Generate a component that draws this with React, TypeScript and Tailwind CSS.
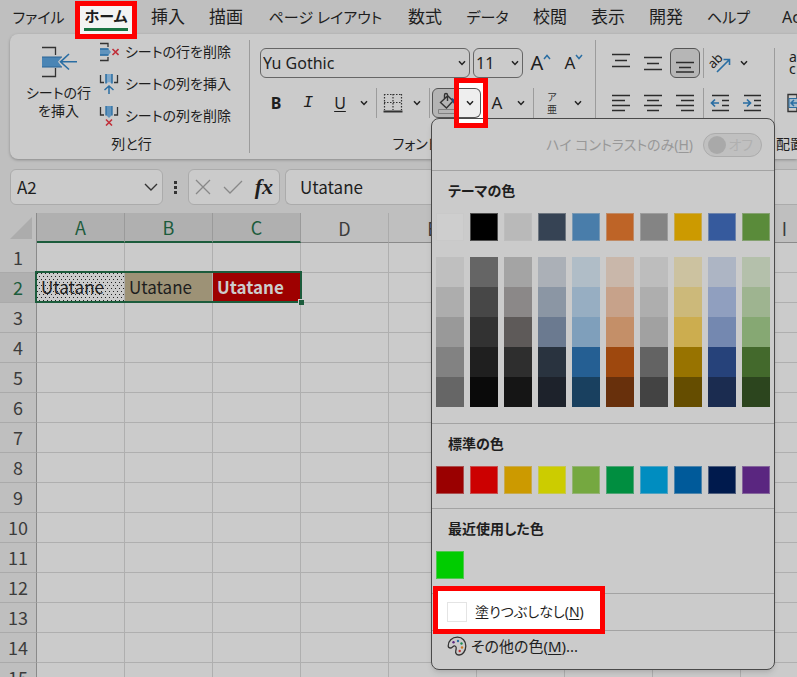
import type { ReactNode } from "react";
import clsx from "clsx";

const TABS = [
  { name: "ファイル", className: "w-[69px] text-[15px]" },
  { name: "ホーム", className: "w-[66px] text-[15px]" },
  { name: "挿入", className: "w-[58px] text-[17px]" },
  { name: "描画", className: "w-[58px] text-[17px]" },
  { name: "ページ レイアウト", className: "w-[141px] text-[15px]" },
  { name: "数式", className: "w-[58px] text-[17px]" },
  { name: "データ", className: "w-[67px] text-[15px]" },
  { name: "校閲", className: "w-[58px] text-[17px]" },
  { name: "表示", className: "w-[58px] text-[17px]" },
  { name: "開発", className: "w-[58px] text-[17px]" },
  { name: "ヘルプ", className: "w-[67px] text-[15px]" },
  { name: "Ac", className: "w-[58px] text-base" },
];

const COLUMNS = ["A", "B", "C", "D", "E", "F", "G", "H", "I"];
const ROWS = Array.from({ length: 15 }, (_, i) => i + 1);

const THEME_COLORS = [
  "#cecece",
  "#000000",
  "#b9b9b9",
  "#364354",
  "#497daa",
  "#be6427",
  "#848484",
  "#cc9a00",
  "#365a9d",
  "#5a8b3a",
];

const THEME_SHADES = [
  ["#bfbfbf", "#adadad", "#999999", "#828282", "#666666"],
  ["#656565", "#474747", "#323232", "#1f1f1f", "#0a0a0a"],
  ["#a4a4a4", "#8b8888", "#5e5a59", "#2e2e2e", "#151515"],
  ["#abb0b7", "#8b96a4", "#6b7a90", "#29333f", "#1d222b"],
  ["#b0bdc7", "#97aec2", "#7f9fbb", "#255f93", "#19405f"],
  ["#c9b7aa", "#c7a28a", "#c48f68", "#9e480e", "#68300c"],
  ["#bdbdbd", "#aeaeae", "#a1a1a1", "#636363", "#434343"],
  ["#ccc2a0", "#ccb97a", "#ccad4f", "#987300", "#654d00"],
  ["#adb5c4", "#909fbf", "#7488b0", "#26427a", "#1b2c50"],
  ["#b4c0ab", "#9eb490", "#86a873", "#43692c", "#2c451e"],
];

const STANDARD_COLORS = [
  "#9a0000",
  "#cc0000",
  "#cc9a00",
  "#cccc00",
  "#75a840",
  "#008e40",
  "#008dc0",
  "#005a9a",
  "#001a4d",
  "#5a2680",
];

const Chevron = ({ className }: { className?: string }) => (
  <svg
    viewBox="0 0 8 6"
    className={clsx("h-[6px] w-2 shrink-0", className)}
    fill="none"
    stroke="#222"
    strokeWidth="1.5"
  >
    <path d="M1 1.2 4 4.4 7 1.2" />
  </svg>
);

const Divider = () => <div className="w-px self-stretch bg-[#9c9c9c]" />;

const IconButton: React.FC<{
  label: string;
  className?: string;
  children: ReactNode;
}> = ({ label, className, children }) => (
  <button
    type="button"
    aria-label={label}
    className={clsx(
      "flex h-[30px] shrink-0 items-center justify-center",
      className ?? "w-8",
    )}
  >
    {children}
  </button>
);

const InsertRowIcon = () => (
  <svg viewBox="0 0 38 32" className="h-8 w-[38px] shrink-0" fill="none">
    <path d="M2 1.5h13.5V9M2 30.5h13.500V22" stroke="#333" strokeWidth="1.3" />
    <path d="M2 11h20l-4 4.800 4 5.200H2z" fill="#4a85b5" />
    <path d="M2 11h20M2 21h20" stroke="#2a6496" strokeWidth="1" />
    <path
      d="M37 15.800H21M29 8l-8.500 7.800L29 23.500"
      stroke="#2a6ea3"
      strokeWidth="1.6"
    />
  </svg>
);

const DeleteRowIcon = () => (
  <svg viewBox="0 0 20 20" className="h-5 w-5 shrink-0" fill="none">
    <path d="M1 1.500h8V5M1 18.500h8V15" stroke="#333" strokeWidth="1.3" />
    <path d="M1 6.500h8l3 3.500-3 3.500H1z" fill="#5f93bd" />
    <path d="M1 7h8.500M1 13h8.500" stroke="#2a6ea3" strokeWidth="1.3" />
    <path d="m13.500 7 6 6m0-6-6 6" stroke="#c0303a" strokeWidth="1.6" />
  </svg>
);

const InsertColumnIcon = () => (
  <svg viewBox="0 0 20 20" className="h-5 w-5 shrink-0" fill="none">
    <path d="M1.500 1v7.500H5M18.500 1v7.500H15" stroke="#333" strokeWidth="1.3" />
    <path d="M7 0h6v9.500L10 8l-3 1.500z" fill="#7fa8ca" />
    <path d="M7 0v9.500M13 0v9.500" stroke="#2a6ea3" strokeWidth="1.5" />
    <path d="M10 20v-8M5.500 16 10 12l4.500 4" stroke="#2a6ea3" strokeWidth="1.5" />
  </svg>
);

const DeleteColumnIcon = () => (
  <svg viewBox="0 0 20 20" className="h-5 w-5 shrink-0" fill="none">
    <path d="M1.500 1v8H5M18.500 1v8H15" stroke="#333" strokeWidth="1.3" />
    <path d="M7 0h6v9l-3 3-3-3z" fill="#5f93bd" />
    <path d="M7 0v9.500M13 0v9.500" stroke="#2a6ea3" strokeWidth="1.3" />
    <path d="m7 13.500 6 6m0-6-6 6" stroke="#c0303a" strokeWidth="1.6" />
  </svg>
);

const BordersIcon = () => (
  <svg viewBox="0 0 20 20" className="h-5 w-5" fill="none" stroke="#333">
    <path
      d="M1 1.500h18M1 9.500h18M1.500 1v16M10 1v16M18.500 1v16"
      strokeDasharray="1.5 1.5"
      strokeWidth="1.2"
    />
    <path d="M0.500 18.500h19" strokeWidth="2" />
  </svg>
);

const FillIcon = () => (
  <svg viewBox="0 0 22 24" className="h-6 w-[22px] shrink-0" fill="none">
    <path
      d="M10.500 5 3.500 11.500l6 5.500 6.500-7-5.500-5.500M10.500 10V4c0-2-3-2-3 0v3.500"
      stroke="#333"
      strokeWidth="1.4"
    />
    <path d="M14.500 7c3 .5 4 3.500 3.500 7.500L15 10z" fill="#1d4f80" />
    <path d="M1.500 18.500h20v4h-20z" stroke="#808080" />
  </svg>
);

const LineIcon = ({ d }: { d: string }) => (
  <svg
    viewBox="0 0 20 20"
    className="h-5 w-5"
    fill="none"
    stroke="#2c2c2c"
    strokeWidth="1.4"
  >
    <path d={d} />
  </svg>
);

const OrientationIcon = () => (
  <svg viewBox="0 0 22 22" className="h-[22px] w-[22px]" fill="none">
    <text
      x="0"
      y="14"
      fontSize="13"
      fill="#222"
      transform="rotate(-45 6 11)"
      fontFamily="Noto Sans"
    >
      ab
    </text>
    <path
      d="M8 20 20.500 7.500M14.500 7.500H20.500V13"
      stroke="#2a6ea3"
      strokeWidth="1.6"
    />
  </svg>
);

const IndentIcon = ({ flip }: { flip?: boolean }) => (
  <svg viewBox="0 0 20 20" className="h-5 w-5" fill="none">
    <path
      d="M2 2.500h17M12 7.500h7M12 12.500h7M2 17.500h17"
      stroke="#2c2c2c"
      strokeWidth="1.4"
    />
    <path
      d={
        flip
          ? "M1 10h7M5 6.500 8.500 10 5 13.500"
          : "M9 10H2M5 6.500 1.500 10 5 13.500"
      }
      stroke="#2a6ea3"
      strokeWidth="1.7"
    />
  </svg>
);

const MergeIcon = () => (
  <svg viewBox="0 0 20 20" className="h-5 w-5 shrink-0" fill="none">
    <path d="M1 1.500h18v17H1zM10 1v4M10 15v4" stroke="#333" strokeWidth="1.4" />
    <path d="M2 5.500h16v9H2z" fill="#a6bccd" stroke="#2a6ea3" />
    <path
      d="M4 10h12M7 7l-3 3 3 3M13 7l3 3-3 3"
      stroke="#2a6ea3"
      strokeWidth="1.5"
    />
  </svg>
);

const PaletteIcon = () => (
  <svg viewBox="0 0 20 20" className="h-5 w-5 shrink-0" fill="none">
    <path
      d="M1.200 10C1 5 5 1.200 10.500 1.200c5 0 8.300 3.800 8.300 8.800 0 5-3.300 9.300-7 9-2.600-.3-3.600-2-3-4.300.6-2.200.7-4.200-.8-4.700-1.800-.6-2.800 2-4.500 2-1.300 0-2.200-.7-2.300-2Z"
      stroke="#333"
      strokeWidth="1.3"
    />
    <circle cx="6.500" cy="6.200" r="1.200" fill="#5a2680" />
    <circle cx="11" cy="5" r="1.200" fill="#2a6ea3" />
    <circle cx="14.500" cy="7.500" r="1.200" fill="#1a8a50" />
    <circle cx="15" cy="11.500" r="1.200" fill="#cc7a20" />
    <circle cx="12.700" cy="15" r="1.200" fill="#c03030" />
  </svg>
);

const Swatch = ({ color }: { color: string }) => (
  <button
    type="button"
    aria-label={color}
    className="block h-7 w-7 border border-[#c4c4c4]/40"
    style={{ backgroundColor: color }}
  />
);

const SectionTitle = ({ children }: { children: ReactNode }) => (
  <h2 className="flex h-[42px] items-center pb-0.5 pl-3 text-sm font-bold">
    {children}
  </h2>
);

const FillColorMenu = () => (
  <div className="absolute top-[29px] -left-0.5 z-10 w-[344px] rounded-lg border border-[#4a4a4a] bg-[#cbcbcb] whitespace-nowrap shadow-md">
    <div className="flex h-[52px] items-center justify-end gap-2.5 border-b border-[#a3a3a3] pr-3 text-sm text-[#989898]">
      <label htmlFor="contrast">
        ハイ コントラストのみ(<u className="underline-offset-2">H</u>)
      </label>
      <button
        id="contrast"
        type="button"
        role="switch"
        aria-checked={false}
        className="flex h-6 w-[59px] items-center justify-between rounded-full border border-[#acacac] bg-[#c0c0c0] pr-2 pl-1 text-[#b0b0b0]"
      >
        <span className="h-[18px] w-[18px] rounded-full bg-[#a9a9a9]" />
        オフ
      </button>
    </div>
    <section className="border-b border-[#a3a3a3] px-1 pb-4">
      <SectionTitle>テーマの色</SectionTitle>
      <div className="flex gap-1.5">
        {THEME_COLORS.map((color) => (
          <Swatch key={color} color={color} />
        ))}
      </div>
      <div className="mt-4 flex gap-1.5">
        {THEME_SHADES.map((shades) => (
          <div key={shades[0]} className="flex flex-col">
            {shades.map((color) => (
              <button
                key={color}
                type="button"
                aria-label={color}
                className="h-[30px] w-7"
                style={{ backgroundColor: color }}
              />
            ))}
          </div>
        ))}
      </div>
    </section>
    <section className="border-b border-[#a3a3a3] px-1 pb-3.5">
      <SectionTitle>標準の色</SectionTitle>
      <div className="flex gap-1.5">
        {STANDARD_COLORS.map((color) => (
          <Swatch key={color} color={color} />
        ))}
      </div>
    </section>
    <section className="border-b border-[#a3a3a3] px-1 pb-3.5">
      <SectionTitle>最近使用した色</SectionTitle>
      <Swatch color="#00cc00" />
    </section>
    <div className="relative border-b border-[#a3a3a3]">
      <span className="absolute -top-2 left-px h-12 w-[172px] border-5 border-[#fe0000] bg-white" />
      <button
        type="button"
        className="relative flex h-9 items-center gap-2 pl-[15px] text-sm"
      >
        <span className="h-5 w-5 border border-[#e4e4e4]" />
        <span>
          塗りつぶしなし(<u className="underline-offset-2">N</u>)
        </span>
      </button>
    </div>
    <button
      type="button"
      className="mb-2 flex h-[30px] items-center gap-1 pl-[15px] text-[15px]"
    >
      <PaletteIcon />
      <span>
        その他の色(<u className="underline-offset-2">M</u>)...
      </span>
    </button>
  </div>
);

const TabBar = () => (
  <nav className="flex h-[34px] items-center pl-1 whitespace-nowrap">
    {TABS.map(({ name, className }) => (
      <button
        key={name}
        type="button"
        className={clsx(
          "relative h-[34px] shrink-0",
          name === "ホーム" && "font-bold",
          className,
        )}
      >
        {name === "ホーム" ? (
          <>
            <span className="absolute inset-x-0.5 top-px z-10 h-[38px] border-5 border-[#fe0000] bg-[#f4f4f4]" />
            <span className="relative z-10 mx-auto block w-11 border-b-3 border-[#1a7343] leading-6">
              {name}
            </span>
          </>
        ) : (
          name
        )}
      </button>
    ))}
  </nav>
);

const CellsGroup = () => (
  <section className="flex w-[239px] shrink-0 flex-col text-sm whitespace-nowrap">
    <div className="flex h-[100px] gap-1">
      <button
        type="button"
        className="flex w-[85px] flex-col items-center gap-1.5 pt-3 pl-3 leading-[18px]"
      >
        <InsertRowIcon />
        <span>
          シートの行
          <br />
          を挿入
        </span>
      </button>
      <div className="flex flex-col pt-0.5">
        <button type="button" className="flex h-8 items-center gap-1.5">
          <DeleteRowIcon />
          シートの行を削除
        </button>
        <button type="button" className="flex h-8 items-center gap-1.5">
          <InsertColumnIcon />
          シートの列を挿入
        </button>
        <button type="button" className="flex h-8 items-center gap-1.5">
          <DeleteColumnIcon />
          シートの列を削除
        </button>
      </div>
    </div>
    <h3 className="pl-1 text-center">列と行</h3>
  </section>
);

const FontGroup = () => (
  <section className="flex w-[345px] shrink-0 flex-col pt-3.5 pl-2.5">
    <div className="flex h-[30px] items-center gap-[3px]">
      <div className="relative">
        <select
          aria-label="フォント"
          className="h-[30px] w-[210px] appearance-none rounded-md border border-[#666] pl-0.5 text-base"
        >
          <option>Yu Gothic</option>
        </select>
        <Chevron className="pointer-events-none absolute top-3 right-1" />
      </div>
      <div className="relative">
        <select
          aria-label="フォント サイズ"
          className="h-[30px] w-[50px] appearance-none rounded-md border border-[#666] pl-0.5 text-base"
        >
          <option>11</option>
        </select>
        <Chevron className="pointer-events-none absolute top-3 right-1" />
      </div>
      <IconButton label="フォント サイズの拡大" className="w-[30px]">
        <span className="text-xl">A</span>
        <svg viewBox="0 0 8 6" className="mb-3 h-[6px] w-2" fill="none">
          <path d="M1 5 4 1.500 7 5" stroke="#2a6ea3" strokeWidth="1.5" />
        </svg>
      </IconButton>
      <IconButton label="フォント サイズの縮小" className="w-[30px]">
        <span className="text-[17px]">A</span>
        <svg viewBox="0 0 8 6" className="mb-3 h-[6px] w-2" fill="none">
          <path d="M1 1 4 4.500 7 1" stroke="#2a6ea3" strokeWidth="1.5" />
        </svg>
      </IconButton>
    </div>
    <div className="mt-2.5 flex h-[30px] items-center">
      <IconButton label="太字">
        <b className="text-base">B</b>
      </IconButton>
      <IconButton label="斜体">
        <i className="font-['Liberation_Mono',monospace] text-[17px]">I</i>
      </IconButton>
      <IconButton label="下線">
        <u className="text-base underline-offset-2">U</u>
      </IconButton>
      <IconButton label="下線の種類" className="w-4">
        <Chevron />
      </IconButton>
      <span className="w-1" />
      <Divider />
      <IconButton label="罫線">
        <BordersIcon />
      </IconButton>
      <IconButton label="罫線の種類" className="w-4">
        <Chevron />
      </IconButton>
      <span className="w-1" />
      <Divider />
      <div className="relative ml-0.5 flex h-[30px] w-[49px] rounded-md border border-[#555] bg-[#b4b4b4]">
        <IconButton label="塗りつぶしの色" className="-mt-px w-[22px] pl-2">
          <FillIcon />
        </IconButton>
        <FillColorMenu />
        <span className="absolute -top-[11px] left-[21px] z-20 h-[50px] w-[34px] border-5 border-[#fe0000] bg-white">
          <span className="block h-9 border-b border-[#4a4a4a]" />
        </span>
        <IconButton
          label="塗りつぶしの色の選択"
          className="absolute -top-px left-[26px] z-20 w-[22px] rounded-r-md border border-l-0 border-[#555] bg-[#eeeeee]"
        >
          <Chevron />
        </IconButton>
      </div>
      <IconButton label="フォントの色">
        <span className="text-[17px]">A</span>
      </IconButton>
      <IconButton label="フォントの色の選択" className="w-4">
        <Chevron />
      </IconButton>
      <span className="w-1" />
      <Divider />
      <IconButton label="ふりがなの表示" className="w-9">
        <span className="flex flex-col text-[10px] leading-3 text-[#333]">
          <span>ア</span>
          <span>亜</span>
        </span>
      </IconButton>
      <IconButton label="ふりがなの設定" className="w-4">
        <Chevron />
      </IconButton>
    </div>
    <h3 className="pt-4 pr-6 text-center text-sm">フォント</h3>
  </section>
);

const AlignmentGroup = () => (
  <section className="flex w-[178px] shrink-0 flex-col pt-3.5 pl-[9px]">
    <div className="flex h-[30px] items-center">
      <IconButton label="上揃え">
        <LineIcon d="M1 1.500h18M4 7.500h12M1 13.500h18" />
      </IconButton>
      <IconButton label="上下中央揃え">
        <LineIcon d="M1 4.500h18M4 10.500h12M1 16.500h18" />
      </IconButton>
      <IconButton
        label="下揃え"
        className="mx-px w-[30px] rounded-md border border-[#555] bg-[#b6b6b6]"
      >
        <LineIcon d="M1 9.500h18M4 14.500h12M1 19h18" />
      </IconButton>
      <span className="w-0.5" />
      <Divider />
      <IconButton label="方向">
        <OrientationIcon />
      </IconButton>
      <IconButton label="方向の選択" className="w-4">
        <Chevron />
      </IconButton>
    </div>
    <div className="mt-2.5 flex h-[30px] items-center">
      <IconButton label="左揃え">
        <LineIcon d="M1 2.500h18M1 7.500h13M1 12.500h18M1 17.500h13" />
      </IconButton>
      <IconButton label="中央揃え">
        <LineIcon d="M1 2.500h18M4 7.500h12M1 12.500h18M4 17.500h12" />
      </IconButton>
      <IconButton label="右揃え">
        <LineIcon d="M1 2.500h18M6 7.500h13M1 12.500h18M6 17.500h13" />
      </IconButton>
      <span className="w-0.5" />
      <Divider />
      <IconButton label="インデントを減らす">
        <IndentIcon />
      </IconButton>
      <IconButton label="インデントを増やす">
        <IndentIcon flip />
      </IconButton>
    </div>
  </section>
);

const Ribbon = () => (
  <div className="relative z-[5] ml-2.5 flex h-[125px] rounded-l-lg bg-[#cbcbcb] shadow-[0_1px_3px_#8a8a8a]">
    <CellsGroup />
    <div className="my-1.5 w-px bg-[#9c9c9c]" />
    <FontGroup />
    <div className="my-1.5 w-px bg-[#9c9c9c]" />
    <AlignmentGroup />
    <div className="my-3.5 w-px bg-[#9c9c9c]" />
    <section className="flex min-w-0 flex-1 flex-col overflow-hidden pt-3.5 whitespace-nowrap">
      <button
        type="button"
        className="flex h-[30px] flex-col justify-center pl-3.5 text-left text-sm leading-3"
      >
        <span>ab</span>
        <span>c</span>
      </button>
      <div className="mt-2.5 flex h-[30px] items-center pl-3">
        <button type="button" aria-label="セルの結合">
          <MergeIcon />
        </button>
      </div>
      <h3 className="pt-4 pl-px text-sm">配置</h3>
    </section>
  </div>
);

const FormulaBar = () => (
  <div className="mt-2.5 flex h-9 items-stretch pl-2.5 font-['Noto_Sans_CJK_JP',sans-serif]">
    <div className="flex w-[153px] shrink-0 items-center rounded-md border border-[#ababab] bg-[#cbcbcb] pr-1">
      <input
        aria-label="名前ボックス"
        defaultValue="A2"
        className="w-full min-w-0 pl-1.5 text-[17px] outline-none"
      />
      <button type="button" aria-label="名前の一覧">
        <svg viewBox="0 0 14 9" className="h-[9px] w-3.5" fill="none">
          <path d="m1 1 6 6 6-6" stroke="#333" strokeWidth="1.4" />
        </svg>
      </button>
    </div>
    <div className="flex w-[25px] shrink-0 flex-col items-center justify-center gap-0.5">
      <span className="h-[3px] w-[3px] bg-[#333]" />
      <span className="h-[3px] w-[3px] bg-[#333]" />
      <span className="h-[3px] w-[3px] bg-[#333]" />
    </div>
    <div className="flex w-[92px] shrink-0 items-center justify-between rounded-md border border-[#ababab] bg-[#cbcbcb] px-1.5">
      <button type="button" aria-label="キャンセル">
        <svg viewBox="0 0 16 16" className="h-4 w-4" fill="none">
          <path d="m1 1 14 14M15 1 1 15" stroke="#888" strokeWidth="1.3" />
        </svg>
      </button>
      <button type="button" aria-label="入力">
        <svg viewBox="0 0 20 14" className="h-3.5 w-5" fill="none">
          <path d="m1 7 6 6L19 1" stroke="#888" strokeWidth="1.3" />
        </svg>
      </button>
      <button
        type="button"
        aria-label="関数の挿入"
        className="font-['Liberation_Serif',serif] text-[22px] leading-6 font-bold italic"
      >
        fx
      </button>
    </div>
    <input
      aria-label="数式バー"
      defaultValue="Utatane"
      className="ml-[5px] min-w-0 flex-1 rounded-l-md border border-r-0 border-[#ababab] bg-[#cbcbcb] pl-3.5 text-[17px] outline-none"
    />
  </div>
);

const SHEET_CELLS: Record<string, ReactNode> = {
  A2: "Utatane",
  B2: "Utatane",
  C2: "Utatane",
};

// A2 carries the 12.5% gray dot pattern
const CELL_STYLES: Record<string, string> = {
  A2: "relative bg-[#cbcbcb] bg-[conic-gradient(at_1px_1px,transparent_270deg,#222_0),conic-gradient(at_1px_1px,transparent_270deg,#222_0)] bg-[length:4px_6px] bg-[position:0_0,2px_3px]",
  B2: "bg-[#9d9276]",
  C2: "bg-[#9e0000] font-bold text-[#cccccc]",
};

const Sheet = () => (
  <table className="mt-2 w-[829px] table-fixed border-separate border-spacing-0 font-['Noto_Sans_CJK_JP',sans-serif] text-[17px] leading-6">
    <thead>
      <tr className="h-[30px]">
        <th className="w-[37px] border-r border-[#8a8a8a] p-0">
          <svg viewBox="0 0 22 22" className="ml-2.5 h-[22px] w-[22px]">
            <path d="M22 0v22H0z" fill="#acacac" />
          </svg>
        </th>
        {COLUMNS.map((column, i) => (
          <th
            key={column}
            scope="col"
            className={clsx(
              "w-[88px] border-r p-0 text-lg leading-6 font-normal",
              i < 3
                ? "border-b-2 border-r-[#9a9a9a] border-b-[#1c5c3c] bg-[#b0b0b0] text-[#1c5c3c]"
                : "border-b border-r-[#ababab] border-b-[#8a8a8a] text-[#3c3c3c]",
            )}
          >
            {column}
          </th>
        ))}
      </tr>
    </thead>
    <tbody>
      {ROWS.map((row) => (
        <tr key={row} className="h-[30px]">
          <th
            scope="row"
            className={clsx(
              "border-r border-b border-r-[#8a8a8a] border-b-[#aaaaaa] p-0 pb-0.5 text-lg leading-6 font-normal",
              row === 2 ? "bg-[#b0b0b0] text-[#1c5c3c]" : "text-[#3c3c3c]",
            )}
          >
            {row}
          </th>
          {COLUMNS.map((column) => (
            <td
              key={column}
              className={clsx(
                "border-r border-b border-[#afafaf] p-0 pb-0.5 pl-1",
                CELL_STYLES[`${column}${row}`] ?? "bg-[#cbcbcb]",
              )}
            >
              {SHEET_CELLS[`${column}${row}`]}
              {column === "A" && row === 2 && (
                <span className="absolute -top-0.5 -left-0.5 h-8 w-[267px] border-2 border-[#1c5c3c]">
                  <span className="absolute -right-1 -bottom-1 h-1.5 w-1.5 border-t border-l border-[#cbcbcb] bg-[#1c5c3c]" />
                </span>
              )}
            </td>
          ))}
        </tr>
      ))}
    </tbody>
  </table>
);

export default function App() {
  return (
    <div className="h-screen overflow-hidden bg-[#bfbfbf] font-['Noto_Sans','Noto_Sans_CJK_JP',sans-serif] text-[#1e1e1e] [font-feature-settings:'palt']">
      <TabBar />
      <Ribbon />
      <FormulaBar />
      <Sheet />
    </div>
  );
}
